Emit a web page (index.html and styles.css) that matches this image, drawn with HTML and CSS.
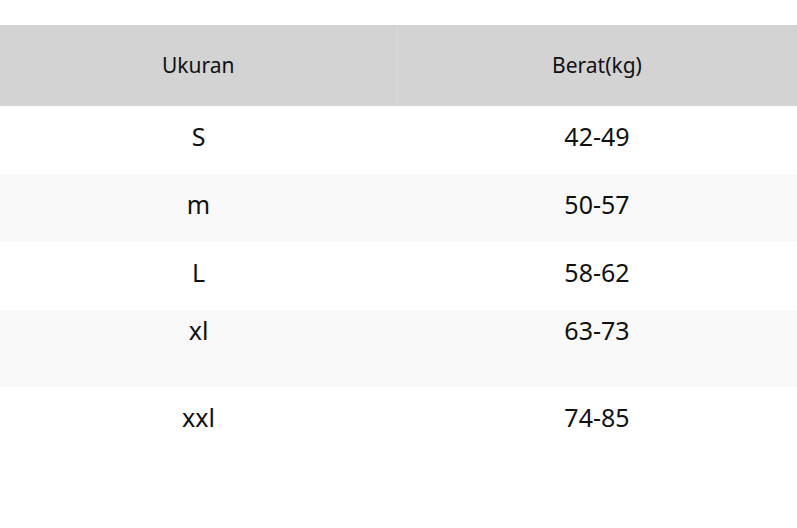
FILE: index.html
```html
<!DOCTYPE html>
<html lang="id">
<head>
<meta charset="utf-8">
<title>Ukuran</title>
<link rel="stylesheet" href="styles.css">
</head>
<body>
<table class="size-table">
  <colgroup><col class="col-a"><col class="col-b"></colgroup>
  <thead>
    <tr><th>Ukuran</th><th>Berat(kg)</th></tr>
  </thead>
  <tbody>
    <tr class="r"><td>S</td><td>42-49</td></tr>
    <tr class="r alt"><td>m</td><td>50-57</td></tr>
    <tr class="r r3"><td>L</td><td>58-62</td></tr>
    <tr class="r alt tall"><td>xl</td><td>63-73</td></tr>
    <tr class="r"><td>xxl</td><td>74-85</td></tr>
  </tbody>
</table>
</body>
</html>
```
FILE: styles.css
```css
html, body {
  margin: 0;
  padding: 0;
  background: #ffffff;
}
body {
  font-family: "Noto Sans", "Open Sans", sans-serif;
  color: #111111;
}
.size-table {
  margin-top: 25px;
  width: 797px;
  border-collapse: collapse;
  table-layout: fixed;
}
.col-a { width: 397px; }
.col-b { width: 400px; }
.size-table th {
  background: #d3d3d3;
  font-weight: 400;
  font-size: 21px;
  line-height: 28px;
  height: 81px;
  box-sizing: border-box;
  padding: 26px 0 27px;
  text-align: center;
  vertical-align: top;
  border-right: 1px solid #dadada;
}
.size-table td {
  font-size: 25px;
  line-height: 34px;
  text-align: center;
  vertical-align: top;
  padding: 13px 0 21px;
  height: 68px;
  box-sizing: border-box;
}
.size-table .alt td { background: #f9f9f9; }
.size-table .r3 td { height: 67px; }
.size-table .tall td {
  height: 77px;
  padding: 3px 0 40px;
}
```
